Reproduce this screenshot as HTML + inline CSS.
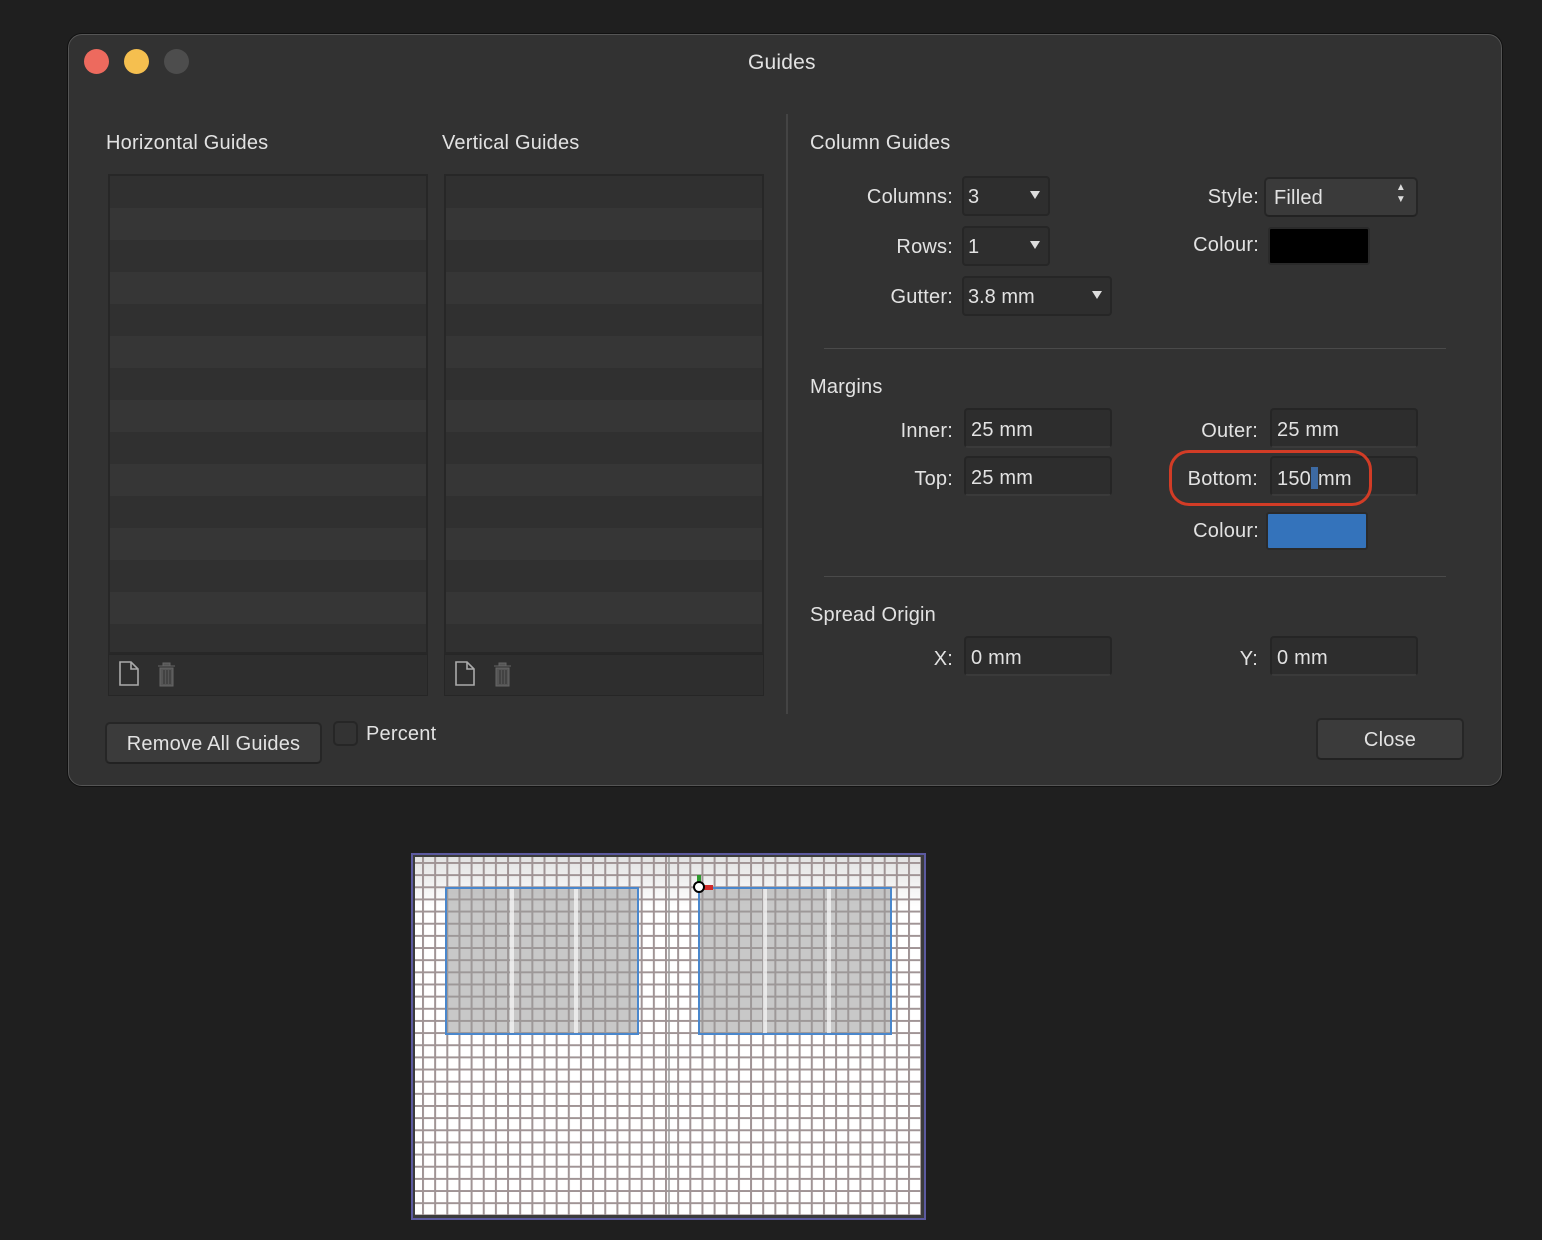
<!DOCTYPE html>
<html><head><meta charset="utf-8"><style>
*{box-sizing:border-box;margin:0;padding:0}
body{width:1542px;height:1240px;background:#1f1f1f;position:relative;overflow:hidden;font-family:"Liberation Sans",sans-serif;color:#e2e2e2}
.a{position:absolute}
.win{left:68px;top:34px;width:1434px;height:752px;background:#323232;border-radius:14px;border:1px solid #555;box-shadow:0 0 0 1px #111}
.dot{width:25px;height:25px;border-radius:50%;top:49px}
.t{font-size:20px;white-space:nowrap;letter-spacing:0.2px}
.lab{font-size:20px;text-align:right;white-space:nowrap;letter-spacing:0.2px}
.list{background:#303030;border:2px solid #272727}
.row{position:absolute;left:0;right:0;height:32px;background:#363636}
.foot{background:#2e2e2e;border:1px solid #262626}
.fld{background:#2d2d2d;border:2px solid #252525;border-bottom-color:#3a3a3a;border-radius:4px;font-size:20px;padding:9px 0 0 5px;height:40px;letter-spacing:0.2px}
.pop{background:#2e2e2e;border:2px solid #262626;border-radius:4px;font-size:20px;padding:8px 0 0 4px;height:40px}
.tri{position:absolute;right:8px;top:13px;width:0;height:0;border-left:5px solid transparent;border-right:5px solid transparent;border-top:8px solid #ddd}
.btn{background:#3b3b3b;border:2px solid #262626;border-bottom-color:#222;border-radius:5px;font-size:20px;text-align:center;letter-spacing:0.2px}
.sep{height:1px;background:#4a4a4a}
</style></head><body>
<div class="a win"></div>
<div class="a dot" style="left:84px;background:#ed6a5e"></div>
<div class="a dot" style="left:124px;background:#f5bf4f"></div>
<div class="a dot" style="left:164px;background:#4d4d4d"></div>
<div class="a t" style="left:748px;top:51px;font-size:21px">Guides</div>

<div class="a t" style="left:106px;top:132px">Horizontal Guides</div>
<div class="a t" style="left:442px;top:132px">Vertical Guides</div>

<div class="a list" style="left:108px;top:174px;width:320px;height:480px">
<div class="row" style="top:32px"></div><div class="row" style="top:96px"></div><div class="row" style="top:160px"></div><div class="row" style="top:224px"></div><div class="row" style="top:288px"></div><div class="row" style="top:352px"></div><div class="row" style="top:416px"></div>
</div>
<div class="a foot" style="left:108px;top:654px;width:320px;height:42px"></div>
<div class="a list" style="left:444px;top:174px;width:320px;height:480px">
<div class="row" style="top:32px"></div><div class="row" style="top:96px"></div><div class="row" style="top:160px"></div><div class="row" style="top:224px"></div><div class="row" style="top:288px"></div><div class="row" style="top:352px"></div><div class="row" style="top:416px"></div>
</div>
<div class="a foot" style="left:444px;top:654px;width:320px;height:42px"></div>
<svg class="a" style="left:118px;top:660px" width="70" height="30">
<path d="M2 2H13L20 9V25H2Z M13 2V9H20" fill="none" stroke="#aaa" stroke-width="1.6"/>
<path d="M40 6H57M45 6V3H52V6M42 8H55V26H42Z" fill="#555" stroke="#666" stroke-width="1"/>
<path d="M46 10V24M49 10V24M52 10V24" stroke="#3a3a3a" stroke-width="1.3"/></svg>
<svg class="a" style="left:454px;top:660px" width="70" height="30">
<path d="M2 2H13L20 9V25H2Z M13 2V9H20" fill="none" stroke="#aaa" stroke-width="1.6"/>
<path d="M40 6H57M45 6V3H52V6M42 8H55V26H42Z" fill="#555" stroke="#666" stroke-width="1"/>
<path d="M46 10V24M49 10V24M52 10V24" stroke="#3a3a3a" stroke-width="1.3"/></svg>

<div class="a" style="left:786px;top:114px;width:2px;height:600px;background:#444"></div>

<div class="a t" style="left:810px;top:132px">Column Guides</div>
<div class="a lab" style="left:800px;width:153px;top:186px">Columns:</div>
<div class="a pop" style="left:962px;top:176px;width:88px">3<div class="tri"></div></div>
<div class="a lab" style="left:800px;width:153px;top:236px">Rows:</div>
<div class="a pop" style="left:962px;top:226px;width:88px">1<div class="tri"></div></div>
<div class="a lab" style="left:800px;width:153px;top:286px">Gutter:</div>
<div class="a pop" style="left:962px;top:276px;width:150px">3.8 mm<div class="tri"></div></div>
<div class="a lab" style="left:1100px;width:159px;top:186px">Style:</div>
<div class="a btn" style="left:1264px;top:177px;width:154px;height:40px;text-align:left;padding:8px 0 0 8px;background:#3a3a3a">Filled<span class="a" style="right:10px;top:3px;font-size:10px;line-height:12px;color:#ddd">▲<br>▼</span></div>
<div class="a lab" style="left:1100px;width:159px;top:234px">Colour:</div>
<div class="a" style="left:1268px;top:227px;width:102px;height:38px;background:#000;border:2px solid #2a2a2a;border-radius:3px"></div>

<div class="a sep" style="left:824px;top:348px;width:622px"></div>
<div class="a t" style="left:810px;top:376px">Margins</div>
<div class="a lab" style="left:800px;width:153px;top:420px">Inner:</div>
<div class="a fld" style="left:964px;top:408px;width:148px">25 mm</div>
<div class="a lab" style="left:800px;width:153px;top:468px">Top:</div>
<div class="a fld" style="left:964px;top:456px;width:148px">25 mm</div>
<div class="a lab" style="left:1100px;width:158px;top:420px">Outer:</div>
<div class="a fld" style="left:1270px;top:408px;width:148px">25 mm</div>
<div class="a lab" style="left:1100px;width:158px;top:468px">Bottom:</div>
<div class="a fld" style="left:1270px;top:456px;width:148px">150<span style="display:inline-block;width:7px;height:22px;background:#3d6aa3;vertical-align:-4px"></span>mm</div>
<div class="a" style="left:1169px;top:450px;width:203px;height:56px;border:3px solid #d23c26;border-radius:20px"></div>
<div class="a lab" style="left:1100px;width:159px;top:520px">Colour:</div>
<div class="a" style="left:1266px;top:512px;width:102px;height:38px;background:#3473bb;border:2px solid #2a2a2a;border-radius:3px"></div>

<div class="a sep" style="left:824px;top:576px;width:622px"></div>
<div class="a t" style="left:810px;top:604px">Spread Origin</div>
<div class="a lab" style="left:800px;width:153px;top:648px">X:</div>
<div class="a fld" style="left:964px;top:636px;width:148px">0 mm</div>
<div class="a lab" style="left:1100px;width:158px;top:648px">Y:</div>
<div class="a fld" style="left:1270px;top:636px;width:148px">0 mm</div>

<div class="a btn" style="left:105px;top:722px;width:217px;height:42px;padding-top:9px">Remove All Guides</div>
<div class="a" style="left:333px;top:721px;width:25px;height:25px;background:#333;border:2px solid #262626;border-radius:5px"></div>
<div class="a t" style="left:366px;top:723px">Percent</div>
<div class="a btn" style="left:1316px;top:718px;width:148px;height:42px;padding-top:9px">Close</div>

<svg class="a" style="left:411px;top:853px" width="515" height="367">
<defs>
<pattern id="g" x="11" y="9" width="12.15" height="12.15" patternUnits="userSpaceOnUse">
<path d="M0 0V12.15M0 0H12.15" stroke="#a09495" stroke-width="4"/></pattern>
<linearGradient id="lg" x1="0" y1="0" x2="0" y2="1"><stop offset="0" stop-color="#e2e2e2"/><stop offset="1" stop-color="#ffffff"/></linearGradient>
</defs>
<rect x="1" y="1" width="513" height="365" fill="#3c3c3c" stroke="#5c5aa0" stroke-width="2"/>
<rect x="4" y="4" width="506" height="358" fill="#fff"/>
<rect x="4" y="4" width="506" height="50" fill="url(#lg)"/>
<rect x="4" y="4" width="506" height="358" fill="url(#g)"/>
<rect x="34" y="34" width="193" height="147" fill="#9a9a9a" opacity="0.55"/>
<rect x="287" y="34" width="193" height="147" fill="#9a9a9a" opacity="0.55"/>
<rect x="99" y="34" width="4" height="147" fill="#f5f5f5" opacity="0.75"/>
<rect x="163" y="34" width="4" height="147" fill="#f5f5f5" opacity="0.75"/>
<rect x="352" y="34" width="4" height="147" fill="#f5f5f5" opacity="0.75"/>
<rect x="416" y="34" width="4" height="147" fill="#f5f5f5" opacity="0.75"/>
<line x1="258" y1="4" x2="258" y2="362" stroke="#999" stroke-width="1.5"/>
<rect x="35" y="35" width="192" height="146" fill="none" stroke="#4a87cc" stroke-width="2"/>
<rect x="288" y="35" width="192" height="146" fill="none" stroke="#4a87cc" stroke-width="2"/>
<rect x="286" y="22" width="4" height="10" fill="#2e9a2e"/>
<rect x="292" y="32" width="10" height="5" fill="#d02a2a"/>
<circle cx="288" cy="34" r="5" fill="#fff" stroke="#000" stroke-width="2"/>
</svg>
</body></html>
